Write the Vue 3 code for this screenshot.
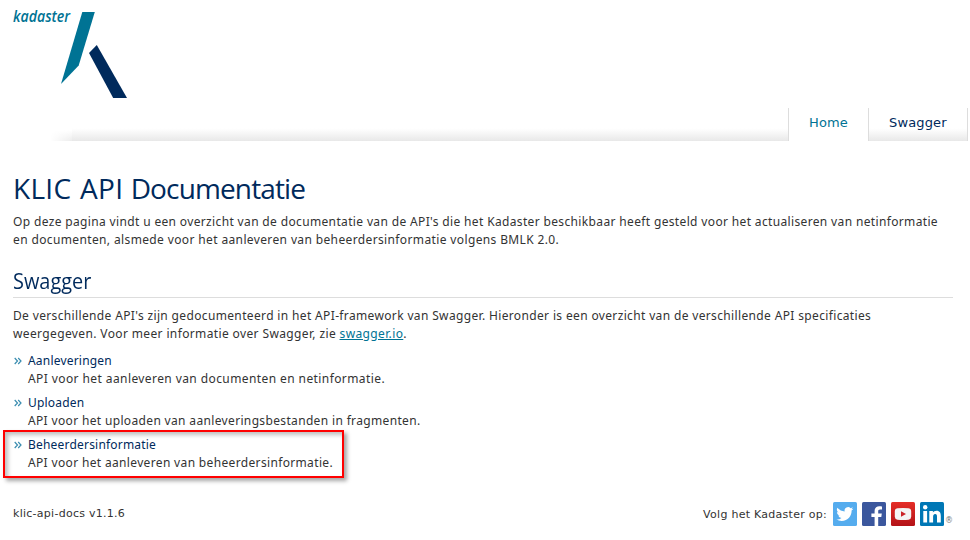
<script setup>
const tabs = [
  { label: 'Home', active: true },
  { label: 'Swagger', active: false },
]
const specs = [
  { name: 'Aanleveringen', text: 'API voor het aanleveren van documenten en netinformatie.', tone: 'wide' },
  { name: 'Uploaden', text: 'API voor het uploaden van aanleveringsbestanden in fragmenten.', tone: '' },
  { name: 'Beheerdersinformatie', text: 'API voor het aanleveren van beheerdersinformatie.', tone: '', marked: true },
]
</script>

<template>
  <div class="page">
    <header>
      <svg class="logo" width="150" height="108" viewBox="0 0 150 108">
        <text class="brand" x="13" y="22.3" textLength="57" lengthAdjust="spacingAndGlyphs">kadaster</text>
        <path d="M82.3 12H94.8L78.7 65.5 61 84Z" fill="#007394" />
        <path d="M96.8 45L127 98H113.2L89 53Z" fill="#002a5c" />
      </svg>
      <nav>
        <div class="fade"></div>
        <div class="bar"></div>
        <a v-for="tab in tabs" :key="tab.label" class="tab" :class="{ active: tab.active }">{{ tab.label }}</a>
      </nav>
    </header>
    <main>
      <h1><span class="caps">KLIC API</span> Documentatie</h1>
      <p class="intro">
        <span class="line l1">Op deze pagina vindt u een overzicht van de documentatie van de API's die het Kadaster beschikbaar heeft gesteld voor het actualiseren van netinformatie</span>
        <span class="line l2">en documenten, alsmede voor het aanleveren van beheerdersinformatie volgens BMLK 2.0.</span>
      </p>
      <h2><span>Swagger</span></h2>
      <p class="about">
        <span class="line l1">De verschillende API's zijn gedocumenteerd in het API-framework van Swagger. Hieronder is een overzicht van de verschillende API specificaties</span>
        <span class="line l2">weergegeven. Voor meer informatie over Swagger, zie <a>swagger.io</a>.</span>
      </p>
      <ul>
        <li v-for="s in specs" :key="s.name" :class="{ marked: s.marked }">
          <svg class="chev" width="8" height="8" viewBox="0 0 8 8"><path d="M.7 1L3.5 4 .7 7M4.2 1L7 4 4.2 7" /></svg>
          <div class="name">{{ s.name }}</div>
          <div class="desc" :class="s.tone">{{ s.text }}</div>
        </li>
      </ul>
    </main>
    <footer>
      <span>klic-api-docs v1.1.6</span>
      <div class="social">
        <span class="follow">Volg het Kadaster op:</span>
        <svg width="24" height="24" viewBox="0 0 24 24">
          <rect width="24" height="24" rx="1.5" fill="#55acee" />
          <path transform="translate(3.3 3.5) scale(.71)" fill="#fff" d="M23.95 4.57a10 10 0 0 1-2.82.77 4.96 4.96 0 0 0 2.16-2.72c-.95.55-2 .95-3.13 1.18a4.92 4.92 0 0 0-8.38 4.48C7.69 8.1 4.07 6.13 1.64 3.16a4.92 4.92 0 0 0 1.52 6.57 4.9 4.9 0 0 1-2.23-.61v.06a4.92 4.92 0 0 0 3.95 4.83 5 5 0 0 1-2.21.08 4.94 4.94 0 0 0 4.6 3.42A9.87 9.87 0 0 1 0 19.54a14 14 0 0 0 7.55 2.21c9.05 0 14-7.5 14-13.98 0-.21 0-.42-.02-.63a9.94 9.94 0 0 0 2.42-2.57z" />
        </svg>
        <svg width="24" height="24" viewBox="0 0 24 24">
          <rect width="24" height="24" rx="1.5" fill="#3b579d" />
          <path fill="#fff" d="M12.6 24v-9.1H9.4v-3.4h3.2V9c0-3.2 1.9-4.8 4.7-4.8 1.3 0 2.3.1 2.7.2v3.2h-1.9c-1.5 0-1.9.7-1.9 1.8v2.1h3.6l-.5 3.4h-3.1V24Z" />
        </svg>
        <svg width="24" height="24" viewBox="0 0 24 24">
          <defs>
            <linearGradient id="yt" x2="0" y2="1"><stop stop-color="#e52d27" /><stop offset="1" stop-color="#b31217" /></linearGradient>
          </defs>
          <rect width="24" height="24" rx="1.5" fill="url(#yt)" />
          <path fill="#f4f4f4" d="M6.5 6.2Q12 5.6 17.5 6.2 20 6.3 20.2 9.3V14.7Q20 17.5 17.5 17.7 12 18.3 6.5 17.7 4 17.5 3.8 14.7V9.3Q4 6.3 6.5 6.2Z" />
          <path fill="#ca2227" d="M10 9.2L15 12 10 14.8Z" />
        </svg>
        <svg width="24" height="24" viewBox="0 0 24 24">
          <rect width="24" height="24" rx="1.5" fill="#0077b5" />
          <circle cx="5.2" cy="5.2" r="2.2" fill="#fff" />
          <path fill="#fff" d="M3.3 9H7.1V20.6H3.3ZM9.3 9H12.9V10.6C13.6 9.4 14.9 8.7 16.5 8.7 19.9 8.7 20.8 11 20.8 14.1V20.6H17V14.9C17 13.4 16.9 12 15.2 12S13.1 13.4 13.1 14.9V20.6H9.3Z" />
        </svg>
        <span class="reg">®</span>
      </div>
    </footer>
  </div>
</template>

<style>
body {
  margin: 0;
  background: #fff;
}
</style>

<style scoped>
.page {
  width: 970px;
  height: 540px;
  overflow: hidden;
  box-sizing: border-box;
  background: #fff;
  color: #333;
  font: 12px/18px "Noto Sans", sans-serif;
  white-space: nowrap;
}
.logo {
  display: block;
}
.brand {
  font: italic 600 16px "Open Sans", sans-serif;
  fill: #007394;
}
nav {
  display: flex;
  height: 33px;
  padding: 0 2px 0 50px;
}
.fade {
  width: 22px;
  background: linear-gradient(to bottom, #fff 68%, #ececec);
  mask-image: linear-gradient(to right, transparent, #000);
}
.bar {
  flex: 1;
  background: linear-gradient(to bottom, #fff 62%, #e8e8e8);
}
.tab {
  box-sizing: border-box;
  width: 100px;
  padding-left: 20px;
  border-left: 1px solid #ddd;
  border-right: 1px solid #ddd;
  background: linear-gradient(to bottom, #fff 62%, #e8e8e8);
  color: #002a5c;
  font: 13px/29px "DejaVu Sans", sans-serif;
  letter-spacing: 0.15px;
}
.tab.active {
  width: 80px;
  border-right: 0;
  background: #fff;
  color: #007394;
}
main {
  padding: 29px 17px 0 13px;
}
h1,
h2 {
  margin: 0;
  color: #002a5c;
  font-family: "Open Sans", sans-serif;
  font-weight: 400;
}
h1 {
  font-size: 28px;
  line-height: 36px;
  letter-spacing: -0.87px;
  word-spacing: 1px;
}
.caps {
  letter-spacing: 0.3px;
}
p {
  margin: 0;
}
.intro {
  padding-top: 7px;
}
.line {
  display: block;
}
.l1 {
  letter-spacing: 0.353px;
}
.l2 {
  letter-spacing: 0.371px;
}
h2 {
  height: 30px;
  margin: 18px 0 9px;
  border-bottom: 1px solid #ddd;
  font-size: 21px;
  line-height: 28px;
}
h2 span {
  display: inline-block;
  transform: scaleX(0.948);
  transform-origin: left;
}
.about a {
  color: #007394;
  text-decoration: underline;
}
ul {
  margin: 9px 0 0;
  padding: 0;
  list-style: none;
}
li {
  position: relative;
  margin-bottom: 6px;
  padding-left: 15px;
}
.chev {
  position: absolute;
  left: 1px;
  top: 5px;
}
.chev path {
  fill: none;
  stroke: #3a8db0;
  stroke-width: 1.2;
}
.name {
  color: #002a5c;
  letter-spacing: 0.2px;
}
.desc {
  letter-spacing: 0.345px;
}
.desc.wide {
  letter-spacing: 0.41px;
}
.marked::after {
  content: "";
  position: absolute;
  box-sizing: border-box;
  left: -10px;
  top: -6px;
  width: 341px;
  height: 48px;
  border: 2px solid #f00;
  box-shadow: 3px 3px 4px rgba(0, 0, 0, 0.35), inset 3px 3px 4px rgba(0, 0, 0, 0.25);
}
footer {
  display: flex;
  align-items: center;
  justify-content: space-between;
  height: 24px;
  margin-top: 30px;
  padding: 0 17px 0 13px;
  font: 11px/26px "DejaVu Sans", sans-serif;
  letter-spacing: 0.27px;
}
.social {
  display: flex;
  gap: 5px;
  height: 24px;
}
.follow {
  margin-right: 1px;
}
.social .reg {
  width: 8px;
  margin-left: -4px;
  padding-top: 6px;
  color: #777;
  font-size: 8px;
  letter-spacing: 0;
}
</style>
